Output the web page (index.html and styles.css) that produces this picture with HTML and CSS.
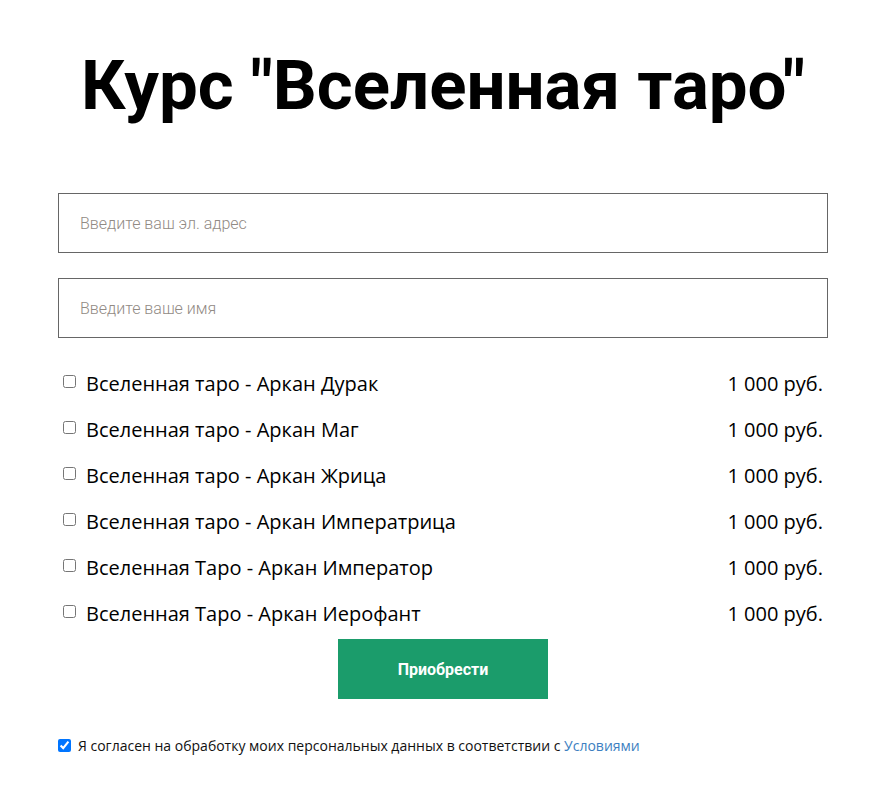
FILE: index.html
```html
<!DOCTYPE html>
<html lang="ru">
<head>
<meta charset="utf-8">
<title>Курс "Вселенная таро"</title>
<link rel="stylesheet" href="styles.css">
</head>
<body>
<div class="page">
  <h1 class="title">Курс "Вселенная таро"</h1>
  <form class="form">
    <input class="field" type="email" placeholder="Введите ваш эл. адрес">
    <input class="field" type="text" placeholder="Введите ваше имя">
    <ul class="products">
      <li class="product"><label class="product-label"><input type="checkbox" class="box"><span>Вселенная таро - Аркан Дурак</span></label><span class="price">1 000 руб.</span></li>
      <li class="product"><label class="product-label"><input type="checkbox" class="box"><span>Вселенная таро - Аркан Маг</span></label><span class="price">1 000 руб.</span></li>
      <li class="product"><label class="product-label"><input type="checkbox" class="box"><span>Вселенная таро - Аркан Жрица</span></label><span class="price">1 000 руб.</span></li>
      <li class="product"><label class="product-label"><input type="checkbox" class="box"><span>Вселенная таро - Аркан Императрица</span></label><span class="price">1 000 руб.</span></li>
      <li class="product"><label class="product-label"><input type="checkbox" class="box"><span>Вселенная Таро - Аркан Император</span></label><span class="price">1 000 руб.</span></li>
      <li class="product"><label class="product-label"><input type="checkbox" class="box"><span>Вселенная Таро - Аркан Иерофант</span></label><span class="price">1 000 руб.</span></li>
    </ul>
    <div class="actions"><button type="button" class="buy">Приобрести</button></div>
    <label class="agree"><input type="checkbox" class="agree-box" checked><span>Я согласен на обработку моих персональных данных в соответствии с <a href="#" class="link">Условиями</a></span></label>
  </form>
</div>
</body>
</html>
```
FILE: styles.css
```css
html, body {
  margin: 0;
  padding: 0;
  background: #fff;
}
body {
  font-family: "Open Sans", "Liberation Sans", sans-serif;
  color: #000;
}
.page {
  width: 770px;
  margin: 0 0 0 58px;
  padding-top: 46px;
}
.title {
  font-family: Roboto, "Liberation Sans", sans-serif;
  font-weight: 700;
  font-size: 69px;
  line-height: 80px;
  text-align: center;
  margin: 0 0 67px;
  white-space: nowrap;
}
.form {
  display: flex;
  flex-direction: column;
}
.field {
  box-sizing: border-box;
  height: 60px;
  width: 100%;
  border: 1px solid #666;
  border-radius: 0;
  padding: 0 21px;
  margin: 0 0 25px;
  font-family: Roboto, "Liberation Sans", sans-serif;
  font-weight: 300;
  font-size: 16px;
  color: #000;
  outline: none;
}
.field::placeholder {
  color: #918a84;
}
.products {
  list-style: none;
  margin: 0;
  padding: 0;
  display: flex;
  flex-direction: column;
  margin-top: -3px;
}
.product {
  display: flex;
  justify-content: space-between;
  align-items: center;
  height: 46px;
  font-size: 20px;
  padding-right: 5px;
}
.product-label {
  display: flex;
  align-items: center;
  gap: 10px;
}
.box {
  width: 13px;
  height: 13px;
  margin: 0 0 3px 5px;
}
.actions {
  display: flex;
  justify-content: center;
  padding-top: 3px;
}
.buy {
  width: 210px;
  height: 60px;
  background: #1b9c6b;
  color: #fff;
  border: 0;
  font-family: Roboto, "Liberation Sans", sans-serif;
  font-weight: 700;
  font-size: 16px;
  cursor: pointer;
}
.agree {
  display: flex;
  align-items: center;
  gap: 7px;
  margin-top: 37px;
  font-size: 14px;
  color: #111;
}
.agree-box {
  width: 13px;
  height: 13px;
  margin: 0;
}
.link {
  color: #3d7fc1;
  text-decoration: none;
}
```
